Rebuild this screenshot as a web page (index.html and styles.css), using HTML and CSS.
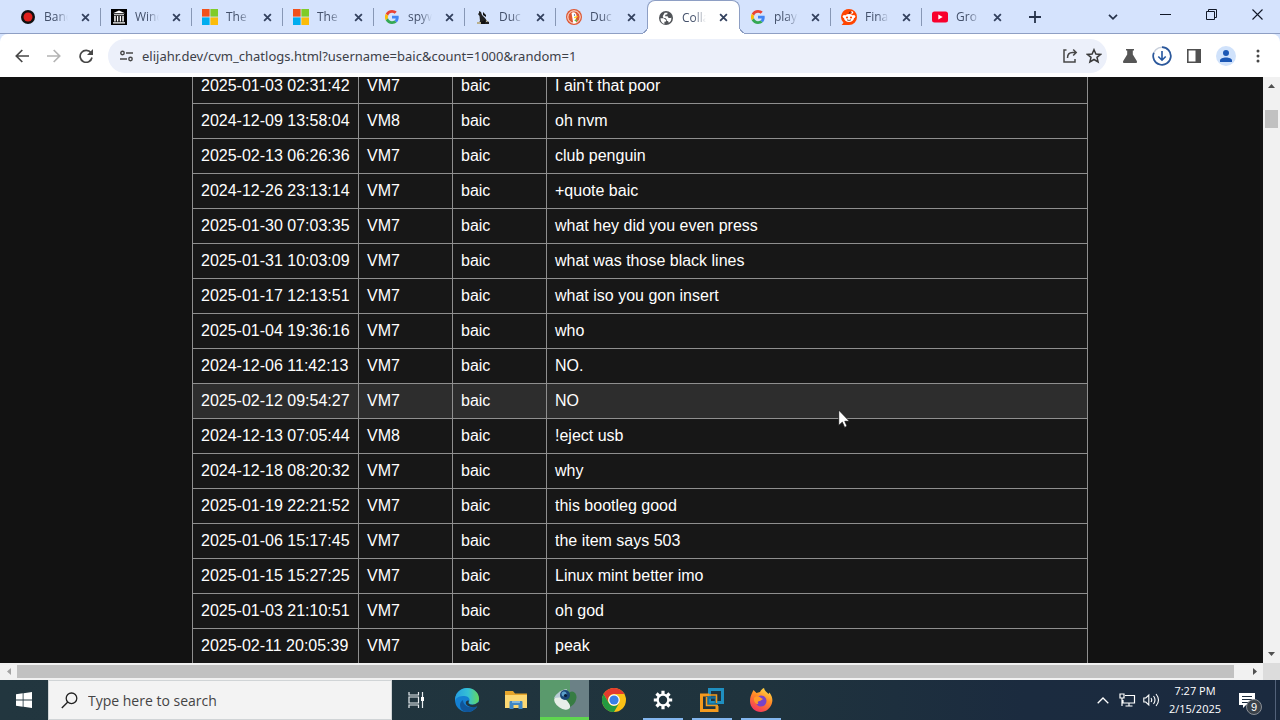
FILE: index.html
```html
<!DOCTYPE html>
<html lang="en">
<head>
    <meta charset="UTF-8">
    <meta name="viewport" content="width=device-width, initial-scale=1.0">
    <title>CollabVM Chatlogs</title>
    <link rel="stylesheet" href="styles.css">
</head>
<body>
    <!-- shared shapes -->
    <svg class="defs" width="0" height="0">
        <symbol id="x" viewBox="0 0 8 8"><path d="M1 1l6 6M7 1L1 7" stroke="currentColor" stroke-width="1.6" fill="none"/></symbol>
        <symbol id="ms" viewBox="0 0 16 16">
            <path fill="#f1511b" d="M0 0h7.6v7.6H0z"/><path fill="#80cc28" d="M8.4 0H16v7.6H8.4z"/>
            <path fill="#00adef" d="M0 8.4h7.6V16H0z"/><path fill="#fbbc09" d="M8.4 8.4H16V16H8.4z"/>
        </symbol>
        <symbol id="google" viewBox="0 0 48 48">
            <path fill="#ea4335" d="M24 9.5c3.5 0 6.700 1.200 9.200 3.600l6.900-6.900C35.900 2.400 30.500 0 24 0 14.600 0 6.500 5.400 2.600 13.200l8 6.200C12.400 13.700 17.700 9.500 24 9.500z"/>
            <path fill="#4285f4" d="M47 24.500c0-1.600-.2-3.100-.4-4.500H24v9h12.900c-.6 3-2.200 5.500-4.700 7.200l7.700 6C44.400 38 47 31.800 47 24.500z"/>
            <path fill="#fbbc05" d="M10.500 28.600a14.500 14.500 0 0 1 0-9.200l-8-6.200a24 24 0 0 0 0 21.600z"/>
            <path fill="#34a853" d="M24 48c6.500 0 11.900-2.100 15.900-5.800l-7.700-6c-2.200 1.500-4.900 2.300-8.200 2.300-6.300 0-11.600-4.200-13.500-9.900l-8 6.200C6.500 42.600 14.600 48 24 48z"/>
        </symbol>
    </svg>

    <header class="browser">
        <div class="tab-strip">
            <div class="tabs">
                <div class="tab">
                    <svg class="favicon" viewBox="0 0 16 16"><circle cx="8" cy="8" r="7" fill="#111"/><circle cx="8" cy="8" r="4.500" fill="#e0201c"/></svg>
                    <span class="tab-title">Banc</span>
                    <button class="tab-close" aria-label="Close tab"><svg><use href="#x"/></svg></button>
                </div>
                <div class="tab">
                    <svg class="favicon" viewBox="0 0 16 16"><path d="M0 0h16v16H0z" fill="#000"/><path d="M2 4.200L8 1.500l6 2.700zM3 5.200h10v1H3zM3.200 7h1.500v5.500H3.200zM5.900 7h1.400v5.500H5.900zM8.700 7h1.400v5.500H8.700zM11.300 7h1.500v5.500h-1.500zM2 13.200h12v1.300H2z" fill="#fff"/></svg>
                    <span class="tab-title">Wind</span>
                    <button class="tab-close" aria-label="Close tab"><svg><use href="#x"/></svg></button>
                </div>
                <div class="tab">
                    <svg class="favicon"><use href="#ms"/></svg>
                    <span class="tab-title">The</span>
                    <button class="tab-close" aria-label="Close tab"><svg><use href="#x"/></svg></button>
                </div>
                <div class="tab">
                    <svg class="favicon"><use href="#ms"/></svg>
                    <span class="tab-title">The</span>
                    <button class="tab-close" aria-label="Close tab"><svg><use href="#x"/></svg></button>
                </div>
                <div class="tab">
                    <svg class="favicon favicon-small"><use href="#google"/></svg>
                    <span class="tab-title">spyw</span>
                    <button class="tab-close" aria-label="Close tab"><svg><use href="#x"/></svg></button>
                </div>
                <div class="tab">
                    <svg class="favicon" viewBox="0 0 16 16"><path fill="#222" d="M4 2l2 1 1 3 3 3 2 3 2 1v2H3l2-3-.500-5L3 5l1-1z"/><path fill="#111" d="M8 3l3 3v2L8 6zM6 13l4-2v4H5z"/><path fill="#b9b08e" d="M2 13h4v2H2zM11 11l2 2h-2z"/></svg>
                    <span class="tab-title">Duc</span>
                    <button class="tab-close" aria-label="Close tab"><svg><use href="#x"/></svg></button>
                </div>
                <div class="tab no-line">
                    <svg class="favicon" viewBox="0 0 16 16"><circle cx="8" cy="8" r="8" fill="#de5833"/><circle cx="8" cy="8" r="6.200" fill="none" stroke="#fff" stroke-width=".9"/><path fill="#fff" d="M5.500 4c2-1.500 5-.3 5 2.700l-.2 2.300-.800 1 .800 4-3 .4z"/><path fill="#fdd20a" d="M8 8c1.500-.7 3-.8 4.200-.4-1 .9-2.300 1.400-4 1.600z"/><path fill="#65bc46" d="M8.500 11l2.500-.7v2.500l-2.300-.7z"/><circle cx="8.500" cy="6" r=".7" fill="#2d4f8e"/></svg>
                    <span class="tab-title">Duc</span>
                    <button class="tab-close" aria-label="Close tab"><svg><use href="#x"/></svg></button>
                </div>
                <div class="tab active">
                    <svg class="favicon" viewBox="0 0 16 16"><circle cx="8" cy="8" r="7" fill="#505357"/><path fill="#fff" d="M2.500 8.200l3.200.1 2.300 1.600v1.600l-1.600.3v2.200c-2.400-.6-4-2.900-3.900-5.800zM9.500 2.700l-.2 1.500-2 .5-.2 1.500h2.500l1 1.900h2l.700-.7c.4 2.300-.7 4.300-2.600 5.400l-.5-1.600-1.500-.4V9.400L7.300 8H5.500L4.700 6.300l2-3.500z"/></svg>
                    <span class="tab-title">Colla</span>
                    <button class="tab-close" aria-label="Close tab"><svg><use href="#x"/></svg></button>
                </div>
                <div class="tab">
                    <svg class="favicon favicon-small"><use href="#google"/></svg>
                    <span class="tab-title">play</span>
                    <button class="tab-close" aria-label="Close tab"><svg><use href="#x"/></svg></button>
                </div>
                <div class="tab">
                    <svg class="favicon" viewBox="0 0 16 16"><path fill="#ff4500" d="M8 0a8 8 0 1 1 0 16H.6L2.500 13.700A8 8 0 0 1 8 0z"/><ellipse cx="8" cy="9" rx="5" ry="4" fill="#fff"/><circle cx="3.200" cy="7.500" r="1.500" fill="#fff"/><circle cx="12.800" cy="7.500" r="1.500" fill="#fff"/><circle cx="11" cy="3.500" r="1.200" fill="#fff"/><circle cx="6" cy="8.500" r="1.100" fill="#ff4500"/><circle cx="10" cy="8.500" r="1.100" fill="#ff4500"/><path d="M6 10.800q2 1.300 4 0M8 5l.7-2 2 .5" fill="none" stroke="#5b2013" stroke-width=".8"/></svg>
                    <span class="tab-title">Fina</span>
                    <button class="tab-close" aria-label="Close tab"><svg><use href="#x"/></svg></button>
                </div>
                <div class="tab no-line">
                    <svg class="favicon" viewBox="0 0 16 16"><rect y="2.500" width="16" height="11" rx="2.500" fill="#f8002c"/><path fill="#fff" d="M6.300 5.500v5L10.700 8z"/></svg>
                    <span class="tab-title">Gro</span>
                    <button class="tab-close" aria-label="Close tab"><svg><use href="#x"/></svg></button>
                </div>
            </div>
            <div class="window-controls">
                <button class="strip-button" aria-label="New tab"><svg width="12" height="12" viewBox="0 0 12 12"><path d="M6 0v12M0 6h12" stroke="#26324a" stroke-width="1.800"/></svg></button>
                <button class="strip-button tab-search" aria-label="Search tabs"><svg width="10" height="6" viewBox="0 0 10 6"><path d="M1 .8l4 4 4-4" fill="none" stroke="#26324a" stroke-width="1.700"/></svg></button>
                <button class="window-button" aria-label="Minimize"><svg width="11" height="11" viewBox="0 0 11 11"><path d="M0 5.500h11" stroke="#111827"/></svg></button>
                <button class="window-button" aria-label="Restore"><svg width="11" height="11" viewBox="0 0 11 11"><path d="M.5 2.500h8v8h-8zM2.500 2.500v-2h8v8h-2" fill="none" stroke="#111827"/></svg></button>
                <button class="window-button" aria-label="Close"><svg width="11" height="11" viewBox="0 0 11 11"><path d="M.5.5l10 10M10.500.5l-10 10" stroke="#111827" stroke-width="1.100"/></svg></button>
            </div>
        </div>

        <div class="toolbar">
            <button class="tool" aria-label="Back"><svg width="14" height="14" viewBox="0 0 14 14"><path d="M14 7H1.500M7.300 1L1.300 7l6 6" fill="none" stroke="#474747" stroke-width="1.700"/></svg></button>
            <button class="tool" aria-label="Forward" disabled><svg width="14" height="14" viewBox="0 0 14 14"><path d="M0 7h12.500M6.700 1l6 6-6 6" fill="none" stroke="#b4b4b4" stroke-width="1.700"/></svg></button>
            <button class="tool" aria-label="Reload"><svg width="14" height="14" viewBox="0 0 14 14"><path d="M12 3.800A6 6 0 1 0 13 8.500" fill="none" stroke="#474747" stroke-width="1.700"/><path d="M14 0v6H8z" fill="#474747"/></svg></button>
            <div class="address">
                <button class="site-info" aria-label="Site information"><svg width="13" height="12" viewBox="0 0 13 12"><path d="M6 3h7M0 9h7" stroke="#474747" stroke-width="1.400"/><circle cx="2.500" cy="3" r="1.700" fill="none" stroke="#474747" stroke-width="1.400"/><circle cx="10.500" cy="9" r="1.700" fill="none" stroke="#474747" stroke-width="1.400"/></svg></button>
                <input class="url" type="text" aria-label="Address" value="elijahr.dev/cvm_chatlogs.html?username=baic&amp;count=1000&amp;random=1">
                <button class="address-button" aria-label="Share"><svg width="16" height="16" viewBox="0 0 16 16"><path d="M4.500 2H2v12h11v-3M5.500 10c0-3.500 2-5.500 5-5.500H14M11.200 1.500l3 3-3 3" fill="none" stroke="#474747" stroke-width="1.500"/></svg></button>
                <button class="address-button" aria-label="Bookmark"><svg width="16" height="16" viewBox="0 0 16 16"><path d="M8 1.700l1.900 4.300 4.700.4-3.600 3 1.100 4.600L8 11.500 3.900 14 5 9.400l-3.600-3L6.100 6z" fill="none" stroke="#3a3a3a" stroke-width="1.500"/></svg></button>
            </div>
            <button class="tool" aria-label="Experiments"><svg width="16" height="16" viewBox="0 0 16 16"><path d="M4 1h8v1.600h-1.200V6.500l4 6.500q.8 2-1.300 2h-11q-2.100 0-1.300-2l4-6.500V2.600H4z" fill="#565656"/></svg></button>
            <button class="tool" aria-label="Downloads"><svg width="20" height="20" viewBox="0 0 20 20"><circle cx="10" cy="10" r="8.800" fill="none" stroke="#c9d0dc" stroke-width="1.500"/><path d="M10 1.200a8.800 8.800 0 1 1-8.200 5.600" fill="none" stroke="#2b589c" stroke-width="1.700"/><path d="M10 5v9M6.300 10.500l3.700 3.700 3.700-3.700" fill="none" stroke="#2456a0" stroke-width="1.600"/></svg></button>
            <button class="tool" aria-label="Side panel"><svg width="14" height="14" viewBox="0 0 14 14"><path d="M.8.800h12.400v12.400H.8z" fill="none" stroke="#505050" stroke-width="1.600"/><path d="M8.500 0H14v14H8.500z" fill="#505050"/></svg></button>
            <button class="tool" aria-label="Profile"><svg width="20" height="20" viewBox="0 0 20 20"><circle cx="10" cy="10" r="10" fill="#d0e2fb"/><circle cx="10" cy="7" r="3" fill="#1b57b5"/><path d="M4 16v-1.500c0-4 12-4 12 0V16z" fill="#1b57b5"/></svg></button>
            <button class="tool" aria-label="Menu"><svg width="4" height="14" viewBox="0 0 4 14"><g fill="#474747"><circle cx="2" cy="2" r="1.500"/><circle cx="2" cy="7" r="1.500"/><circle cx="2" cy="12" r="1.500"/></g></svg></button>
        </div>
    </header>

    <main class="viewport">
        <div class="page">
            <table class="chatlogs">
                <colgroup>
                    <col class="col-time">
                    <col class="col-vm">
                    <col class="col-user">
                    <col>
                </colgroup>
                <tbody>
                    <tr><td>2025-01-03 02:31:42</td><td>VM7</td><td>baic</td><td>I ain't that poor</td></tr>
                    <tr><td>2024-12-09 13:58:04</td><td>VM8</td><td>baic</td><td>oh nvm</td></tr>
                    <tr><td>2025-02-13 06:26:36</td><td>VM7</td><td>baic</td><td>club penguin</td></tr>
                    <tr><td>2024-12-26 23:13:14</td><td>VM7</td><td>baic</td><td>+quote baic</td></tr>
                    <tr><td>2025-01-30 07:03:35</td><td>VM7</td><td>baic</td><td>what hey did you even press</td></tr>
                    <tr><td>2025-01-31 10:03:09</td><td>VM7</td><td>baic</td><td>what was those black lines</td></tr>
                    <tr><td>2025-01-17 12:13:51</td><td>VM7</td><td>baic</td><td>what iso you gon insert</td></tr>
                    <tr><td>2025-01-04 19:36:16</td><td>VM7</td><td>baic</td><td>who</td></tr>
                    <tr><td>2024-12-06 11:42:13</td><td>VM7</td><td>baic</td><td>NO.</td></tr>
                    <tr class="hovered"><td>2025-02-12 09:54:27</td><td>VM7</td><td>baic</td><td>NO</td></tr>
                    <tr><td>2024-12-13 07:05:44</td><td>VM8</td><td>baic</td><td>!eject usb</td></tr>
                    <tr><td>2024-12-18 08:20:32</td><td>VM7</td><td>baic</td><td>why</td></tr>
                    <tr><td>2025-01-19 22:21:52</td><td>VM7</td><td>baic</td><td>this bootleg good</td></tr>
                    <tr><td>2025-01-06 15:17:45</td><td>VM7</td><td>baic</td><td>the item says 503</td></tr>
                    <tr><td>2025-01-15 15:27:25</td><td>VM7</td><td>baic</td><td>Linux mint better imo</td></tr>
                    <tr><td>2025-01-03 21:10:51</td><td>VM7</td><td>baic</td><td>oh god</td></tr>
                    <tr><td>2025-02-11 20:05:39</td><td>VM7</td><td>baic</td><td>peak</td></tr>
                </tbody>
            </table>
        </div>
        <div class="scroll-v">
            <svg width="7" height="4" viewBox="0 0 7 4"><path d="M0 4l3.500-4L7 4z" fill="#505050"/></svg>
            <div class="thumb-v"></div>
            <svg width="7" height="4" viewBox="0 0 7 4"><path d="M0 0l3.500 4L7 0z" fill="#505050"/></svg>
        </div>
    </main>
    <div class="scroll-h">
        <svg width="4" height="7" viewBox="0 0 4 7"><path d="M4 0L0 3.500 4 7z" fill="#a3a3a3"/></svg>
        <div class="track-h"><div class="thumb-h"></div></div>
        <svg width="4" height="7" viewBox="0 0 4 7"><path d="M0 0l4 3.500L0 7z" fill="#505050"/></svg>
        <div class="corner"></div>
    </div>

    <footer class="taskbar">
        <button class="start" aria-label="Start"><svg width="16" height="16" viewBox="0 0 16 16"><path fill="#fff" d="M0 2.300L6.700 1.300v6.300H0zM7.500 1.200L16 0v7.600H7.500zM0 8.400h6.700v6.300L0 13.700zM7.500 8.400H16V16l-8.500-1.200z"/></svg></button>
        <label class="search">
            <svg width="17" height="17" viewBox="0 0 17 17"><circle cx="10.500" cy="6.300" r="5.300" fill="none" stroke="#222" stroke-width="1.300"/><path d="M6.800 10L.8 16" stroke="#222" stroke-width="1.400"/></svg>
            <input type="text" placeholder="Type here to search" aria-label="Search">
        </label>
        <button class="task-view" aria-label="Task view"><svg width="17" height="16" viewBox="0 0 17 16"><path d="M1 0v3h9.500V0M1 16v-3h9.500v3M1 5h9.500v6H1zM14.500 0v16" fill="none" stroke="#e8edf0" stroke-width="1.200"/><path d="M13 5h3v4h-3z" fill="#fff"/></svg></button>
        <button class="app" aria-label="Edge"><svg width="24" height="24" viewBox="0 0 24 24">
            <defs><linearGradient id="edge-top" x1="0" x2="1"><stop offset="0" stop-color="#259ee0"/><stop offset=".55" stop-color="#35c1d5"/><stop offset="1" stop-color="#65d85b"/></linearGradient></defs>
            <circle cx="12" cy="12" r="12" fill="#1480d2"/><path d="M0 11C1 4 6 0 12 0c7 0 12 5 12 10.500 0 4-3 6-6.500 6-3 0-4-1.500-3.500-2.500 2-3-1-6-4.500-6C5 8 1 9 0 13z" fill="url(#edge-top)"/><path d="M8 12c0 5 5 9 14 6.500C20 22 16 24 12 24 7 24 5 20 5 17c0-2 1-4 3-5z" fill="#105599"/><path d="M13.800 12.500c.5 1-1.300 2 .2 3.300 2 1.500 6 1.200 8.500-1l1.500-.8v4l-2 .6c-4 1.200-8.500.5-10.500-1.800-1.500-2-.5-4.500 2.300-4.300z" fill="#22353f"/>
        </svg></button>
        <button class="app" aria-label="File Explorer"><svg width="24" height="20" viewBox="0 0 24 20"><path fill="#e6a52b" d="M1 1h8l2 2.500h12V18H1z"/><path fill="#fcd873" d="M1 5h22v13H1z"/><path fill="#3e86c5" d="M5.500 19v-7q0-1 1-1h11q1 0 1 1v7h-4v-4h-5v4z"/><path fill="#83b7dc" d="M8 11h8v2H8z"/></svg></button>
        <button class="app current" aria-label="VM client"><svg width="24" height="24" viewBox="0 0 24 24"><ellipse cx="17.500" cy="12" rx="5.500" ry="8" fill="#377c43" transform="rotate(25 17 12)"/><ellipse cx="9.500" cy="16" rx="9" ry="5" fill="#e7eee8" transform="rotate(35 9 15.500)"/><path d="M1 11c2-4 6-8 13-9l-2 8z" fill="#b9ccd6"/><circle cx="12" cy="8" r="5" fill="#1b4778"/><circle cx="11" cy="7" r="2.500" fill="#5b9ec9"/><circle cx="12.500" cy="8.500" r="1.600" fill="#091d38"/></svg></button>
        <button class="app" aria-label="Chrome"><svg width="24" height="24" viewBox="0 0 24 24"><circle cx="12" cy="12" r="12" fill="#fbc116"/><path d="M1.600 6A12 12 0 0 1 22.400 6H12a6 6 0 0 0-5.200 9z" fill="#e33b2e"/><path d="M1.600 6A12 12 0 0 0 12 24l5.200-9A6 6 0 0 1 6.800 15z" fill="#249a41"/><circle cx="12" cy="12" r="5.800" fill="#fff"/><circle cx="12" cy="12" r="4.600" fill="#397fe6"/></svg></button>
        <button class="app running" aria-label="Settings"><svg width="20" height="20" viewBox="0 0 20 20"><g stroke="#fff" stroke-width="3.200"><path d="M10 .8v18.400M.8 10h18.400M3.500 3.500l13 13M16.500 3.500l-13 13"/></g><circle cx="10" cy="10" r="6.500" fill="#fff"/><circle cx="10" cy="10" r="4.200" fill="#1f333d"/></svg></button>
        <button class="app running" aria-label="VMware"><svg width="24" height="24" viewBox="0 0 24 24"><path d="M9.500 1.500h13v13h-13z" fill="none" stroke="#1f8fc0" stroke-width="3"/><path d="M9 7H1.500v15.500H17V18" fill="none" stroke="#f39a1e" stroke-width="3"/><path d="M8 9.500h8v7H8z" fill="none" stroke="#176b96" stroke-width="2.500"/><path d="M6.500 9v8.500H18M8 7h8.500v8" fill="none" stroke="#f39a1e" stroke-width="1.500"/></svg></button>
        <button class="app running" aria-label="Firefox"><svg width="24" height="24" viewBox="0 0 24 24">
            <defs><linearGradient id="fox" x1=".8" y1="0" x2=".3" y2="1"><stop offset="0" stop-color="#ffe14a"/><stop offset=".45" stop-color="#ff8a25"/><stop offset="1" stop-color="#f4345f"/></linearGradient></defs>
            <path d="M3 5l1.500-3 3 3L11 4c1-2 2.500-3.500 4-4 .5 3 3 4 4.500 6l1-1.500C23 8 24 11 23 15c-1.300 5-6 9-11 9C6 24 1 19.500 1 13c0-3 .8-5.500 2-8z" fill="url(#fox)"/><circle cx="12" cy="13" r="5.500" fill="#7743c9"/><path d="M5 10c2-2.500 5-2.500 7 0l2 1-3 2c-2 0-3 1.500-1.500 3-3 .5-5-2.500-4.500-6z" fill="#ff9b28"/>
        </svg></button>
        <div class="tray">
            <button class="tray-button" aria-label="Hidden icons"><svg width="12" height="7" viewBox="0 0 12 7"><path d="M.7 6.300L6 1l5.300 5.300" fill="none" stroke="#fff" stroke-width="1.300"/></svg></button>
            <button class="tray-button" aria-label="Network"><svg width="17" height="14" viewBox="0 0 17 14"><path d="M6 2.500h9.500v7.500H4V7M10 10v3M6.500 13h7M1 1h4v4H1zM3 5v8" fill="none" stroke="#fff" stroke-width="1.200"/></svg></button>
            <button class="tray-button" aria-label="Volume"><svg width="17" height="14" viewBox="0 0 17 14"><path d="M.8 5h2l3-3v10l-3-3h-2zM8 5q1.500 2 0 4M10.500 3q3 4 0 8M13 1q5 6 0 12" fill="none" stroke="#fff" stroke-width="1.100"/></svg></button>
            <div class="clock"><span>7:27 PM</span><span>2/15/2025</span></div>
            <button class="notifications" aria-label="Notifications">
                <svg width="16" height="15" viewBox="0 0 16 15"><path d="M0 0h16v12H7l-3 3v-3H0z" fill="#fff"/><path d="M3 3.500h10M3 6.500h10M3 9.500h7" stroke="#1b2b3d"/></svg>
                <span class="badge">9</span>
            </button>
        </div>
    </footer>

    <svg class="cursor" width="12" height="19" viewBox="0 0 12 19"><path d="M.7 1v15.500l3.600-3.300 2.300 5.200 2.500-1.100-2.300-5h4.700z" fill="#fff" stroke="#111" stroke-width=".8"/></svg>
</body>
</html>
```
FILE: styles.css
```css
* {
    box-sizing: border-box;
}

body {
    margin: 0;
    height: 100vh;
    display: flex;
    flex-direction: column;
    overflow: hidden;
    position: relative;
    font-family: "Open Sans", "Noto Sans", sans-serif;
    background: #121212;
}

button {
    border: none;
    padding: 0;
    background: none;
    display: flex;
    align-items: center;
    justify-content: center;
    flex-shrink: 0;
}

input {
    border: none;
    outline: none;
    padding: 0;
    background: none;
    min-width: 0;
    font-family: inherit;
}

.defs,
.cursor {
    position: absolute;
}

/* tabs */

.browser {
    background: #d5e3fd;
}

.tab-strip {
    display: flex;
    height: 34px;
    padding-left: 10px;
    border-bottom: 1px solid #8e9fc4;
}

.tabs {
    display: flex;
    flex: 1;
    min-width: 0;
}

.tab {
    flex: 1 1 0;
    min-width: 0;
    height: 34px;
    display: flex;
    align-items: center;
    padding-left: 10px;
    position: relative;
    color: #43506a;
}

.tab::after {
    content: "";
    position: absolute;
    right: 0;
    top: 8px;
    width: 1px;
    height: 18px;
    background: #8797b5;
}

.tab.no-line::after {
    display: none;
}

.favicon {
    width: 16px;
    height: 16px;
    flex-shrink: 0;
}

.favicon-small {
    width: 14px;
    height: 14px;
    margin: 0 1px;
}

.tab-title {
    width: 24px;
    margin-left: 8px;
    overflow: hidden;
    white-space: nowrap;
    font-size: 12px;
    line-height: 18px;
    -webkit-mask-image: linear-gradient(to right, #000 50%, transparent);
    mask-image: linear-gradient(to right, #000 50%, transparent);
}

.tab-close {
    width: 16px;
    height: 16px;
    margin-left: 9px;
    color: #33415e;
}

.tab-close svg {
    width: 9px;
    height: 9px;
}

.tab.active {
    background: #fff;
    border: 1px solid #8e9fc4;
    border-bottom: none;
    border-radius: 8px 8px 0 0;
    z-index: 1;
}

.tab.active::before,
.tab.active::after {
    content: "";
    position: absolute;
    top: auto;
    bottom: 0;
    width: 8px;
    height: 8px;
}

.tab.active::before {
    left: -8px;
    background: radial-gradient(circle at 0 0, #d5e3fd 7px, #8e9fc4 7px, #8e9fc4 8px, #fff 8px);
}

.tab.active::after {
    right: -8px;
    background: radial-gradient(circle at 100% 0, #d5e3fd 7px, #8e9fc4 7px, #8e9fc4 8px, #fff 8px);
}

.window-controls {
    display: flex;
    width: 267px;
}

.strip-button {
    width: 28px;
    margin-left: 8px;
}

.tab-search {
    margin-left: auto;
    margin-right: 15px;
}

.window-button {
    width: 46px;
    height: 29px;
}

/* toolbar */

.toolbar {
    display: flex;
    align-items: center;
    height: 43px;
    padding: 0 6px;
    background: #fff;
    border-radius: 8px 8px 0 0;
}

.tool {
    width: 32px;
    height: 32px;
}

.address {
    flex: 1;
    display: flex;
    align-items: center;
    height: 34px;
    margin: 0 7px 0 6px;
    padding: 0 1px 0 6px;
    border-radius: 17px;
    background: #ecf0fa;
}

.site-info {
    width: 24px;
    height: 24px;
}

.url {
    flex: 1;
    margin-left: 4px;
    height: 24px;
    font-family: "Noto Sans", "Open Sans", sans-serif;
    font-size: 13px;
    color: #3c4048;
}

.address-button {
    width: 24px;
    height: 24px;
}

/* page */

.viewport {
    flex: 1;
    min-height: 0;
    display: flex;
}

.page {
    flex: 1;
    min-width: 0;
    overflow: hidden;
    background: #121212;
}

.chatlogs {
    width: 70vw;
    margin: -9px 0 0 15vw;
    border-collapse: collapse;
    table-layout: fixed;
    background: #171717;
    color: #fff;
    font-family: "Liberation Sans", Arial, sans-serif;
    font-size: 16px;
    line-height: 18px;
}

.chatlogs td {
    border: 1px solid #8f8f8f;
    padding: 8px;
    white-space: nowrap;
}

.chatlogs .hovered {
    background: #2d2d2d;
}

.col-time {
    width: 166px;
}

.col-vm,
.col-user {
    width: 94px;
}

.scroll-v {
    width: 17px;
    display: flex;
    flex-direction: column;
    align-items: center;
    padding: 7px 0;
    background: #f1f1f1;
}

.thumb-v {
    width: 13px;
    height: 18px;
    margin: 22px 0 auto;
    background: #c1c1c1;
}

.scroll-h {
    display: flex;
    align-items: center;
    height: 17px;
    padding-left: 7px;
    background: #f1f1f1;
}

.track-h {
    flex: 1;
    margin: 0 7px 0 6px;
}

.thumb-h {
    width: 99%;
    height: 13px;
    background: #c1c1c1;
}

.corner {
    width: 17px;
    height: 17px;
    margin-left: 6px;
    background: #dcdcdc;
}

/* taskbar */

.taskbar {
    display: flex;
    height: 40px;
    background: linear-gradient(to right, #22363f, #1f333d 60%, #1b2b3f 80%, #1b2a3f);
}

.start {
    width: 48px;
}

.search {
    display: flex;
    align-items: center;
    width: 344px;
    padding-left: 12px;
    border: 1px solid #d0d4d6;
    background: #f3f3f3;
}

.search input {
    flex: 1;
    margin-left: 10px;
    font-size: 14px;
}

.search input::placeholder {
    color: #444;
    opacity: 1;
}

.task-view {
    width: 48px;
    margin-right: 2px;
}

.app {
    width: 49px;
    position: relative;
}

.app.current {
    background: linear-gradient(to right, #5a9a6c 62%, #6b8186 62%);
    border-bottom: 3px solid #5fd64f;
}

.app.running::after {
    content: "";
    position: absolute;
    left: 5px;
    right: 4px;
    bottom: 0;
    height: 2px;
    background: #83b6ee;
}

.tray {
    display: flex;
    align-items: center;
    margin-left: auto;
    margin-right: 4px;
    padding-right: 8px;
    border-right: 1px solid #53627a;
    color: #fff;
}

.tray-button {
    width: 24px;
    height: 40px;
}

.clock {
    display: flex;
    flex-direction: column;
    align-items: center;
    width: 64px;
    font-size: 11px;
    line-height: 18px;
}

.notifications {
    width: 40px;
    height: 40px;
    position: relative;
}

.badge {
    position: absolute;
    left: 19px;
    top: 19px;
    width: 16px;
    height: 16px;
    border: 1px solid #8a8f96;
    border-radius: 50%;
    background: #3a4149;
    color: #fff;
    font-size: 11px;
    line-height: 14px;
    text-align: center;
}

.cursor {
    left: 838px;
    top: 409px;
}
```
